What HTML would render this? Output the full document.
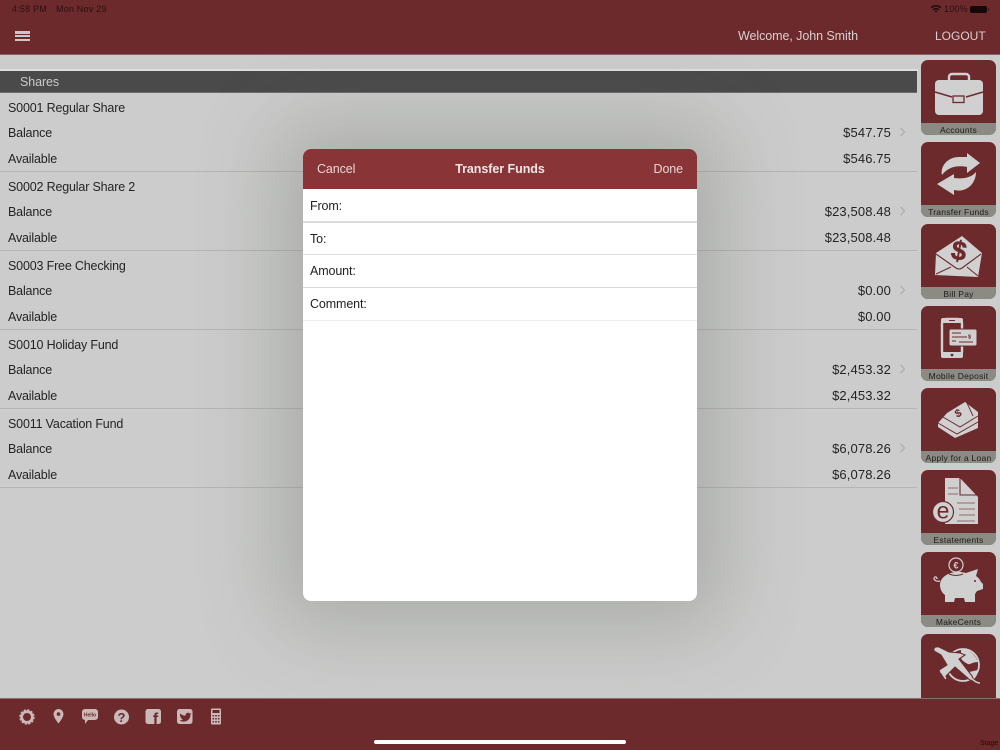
<!DOCTYPE html>
<html><head><meta charset="utf-8"><title>Transfer Funds</title>
<style>
html,body{margin:0;padding:0;width:1000px;height:750px;overflow:hidden;background:#cbcccb;font-family:"Liberation Sans",sans-serif}
.a{position:absolute;white-space:nowrap}
#hd,#ft{position:absolute;left:0;width:1000px;background:#6d2a2c;z-index:3}
#hd{top:0;height:54px;border-bottom:1px solid #8b6364}
#ft{top:699px;height:51px;box-shadow:0 -1px 0 #8b7070}
.t{font-size:12.5px;line-height:16px;color:#242424;left:8px;letter-spacing:-.17px}
.m{font-size:13px;line-height:16px;color:#242424;right:109px;letter-spacing:.12px}
.l{position:absolute;left:0;width:917px;height:1px;background:#b4b5b4}
.c{position:absolute;left:899px}
.tile{position:absolute;left:921px;width:75px;height:75px;border-radius:7px;background:#6d2a2c;overflow:hidden;z-index:1}
.tile b{position:absolute;left:0;right:0;bottom:0;height:12px;background:#8b8b84;color:#1c1c1c;font:8.5px/14px "Liberation Sans",sans-serif;text-align:center;letter-spacing:.25px}
.tile svg{position:absolute;left:0;top:0}
#modal{position:absolute;left:303px;top:149px;width:394px;height:452px;border-radius:8px;background:#fff;z-index:2;box-shadow:0 0 80px 24px rgba(95,100,90,.3);overflow:hidden}
#mh{position:absolute;left:0;top:0;width:394px;height:40px;background:#893437;color:#e6d6d6;font-size:12.5px;line-height:40px}
.f{position:absolute;left:0;width:394px;height:1px;background:#e2e2e2}
.fl{position:absolute;left:7px;font-size:12.5px;line-height:16px;color:#222;letter-spacing:-.12px}
</style></head><body>

<div id="hd">
<div class="a" style="left:12px;top:3px;font-size:9px;line-height:12px;color:#2a1010;letter-spacing:.2px">4:58 PM</div>
<div class="a" style="left:56px;top:3px;font-size:9px;line-height:12px;color:#2a1010;letter-spacing:.2px">Mon Nov 29</div>
<svg class="a" style="left:930px;top:4px" width="12" height="10" viewBox="0 0 12 10"><path d="M.5 3.2a8 8 0 0 1 11 0L10.4 4.4a6.4 6.4 0 0 0-8.800 0zM2.600 5.200a5 5 0 0 1 6.800 0L8.300 6.400a3.400 3.400 0 0 0-4.600 0zM4.600 7.200a2 2 0 0 1 2.800 0L6 8.800z" fill="#1f0d0d"/></svg>
<div class="a" style="left:944px;top:3px;font-size:9px;line-height:12px;color:#2a1010;letter-spacing:.2px">100%</div>
<div class="a" style="left:970px;top:6px;width:17px;height:7px;border-radius:2px;background:#140808"></div>
<div class="a" style="left:988px;top:8px;width:1px;height:3px;background:#3a1a1a"></div>
<div class="a" style="left:15px;top:31px;width:15px;height:2.500px;background:#cfc7c7"></div>
<div class="a" style="left:15px;top:34.800px;width:15px;height:2.500px;background:#cfc7c7"></div>
<div class="a" style="left:15px;top:38.500px;width:15px;height:2.500px;background:#cfc7c7"></div>
<div class="a" style="left:738px;top:28px;font-size:12.5px;line-height:16px;color:#d8d0d0;letter-spacing:-.07px">Welcome, John Smith</div>
<div class="a" style="left:935px;top:28px;font-size:12px;line-height:16px;color:#d8d0d0">LOGOUT</div>
</div>

<div class="a" style="left:0;top:69px;width:918px;height:2px;background:#dedede"></div>
<div class="a" style="left:0;top:71px;width:917px;height:22px;background:#4a4a4a;border-bottom:1px solid #6c6c6c;box-sizing:border-box"></div>
<div class="a" style="left:20px;top:74px;font-size:12.5px;line-height:16px;color:#c9c9c9;letter-spacing:-.1px">Shares</div>

<div class="a t" style="top:100px">S0001 Regular Share</div>
<div class="a t" style="top:125px">Balance</div><div class="a m" style="top:125px">$547.75</div>
<div class="a t" style="top:151px">Available</div><div class="a m" style="top:151px">$546.75</div>
<div class="l" style="top:171px"></div>
<svg class="c" style="top:127px" width="7" height="10"><path d="M1.500 .8l4 4.200-4 4.200" fill="none" stroke="#adadad" stroke-width="1.200"/></svg>

<div class="a t" style="top:179px">S0002 Regular Share 2</div>
<div class="a t" style="top:204px">Balance</div><div class="a m" style="top:204px">$23,508.48</div>
<div class="a t" style="top:230px">Available</div><div class="a m" style="top:230px">$23,508.48</div>
<div class="l" style="top:250px"></div>
<svg class="c" style="top:206px" width="7" height="10"><path d="M1.500 .8l4 4.200-4 4.200" fill="none" stroke="#adadad" stroke-width="1.200"/></svg>

<div class="a t" style="top:258px">S0003 Free Checking</div>
<div class="a t" style="top:283px">Balance</div><div class="a m" style="top:283px">$0.00</div>
<div class="a t" style="top:309px">Available</div><div class="a m" style="top:309px">$0.00</div>
<div class="l" style="top:329px"></div>
<svg class="c" style="top:285px" width="7" height="10"><path d="M1.500 .8l4 4.200-4 4.200" fill="none" stroke="#adadad" stroke-width="1.200"/></svg>

<div class="a t" style="top:337px">S0010 Holiday Fund</div>
<div class="a t" style="top:362px">Balance</div><div class="a m" style="top:362px">$2,453.32</div>
<div class="a t" style="top:388px">Available</div><div class="a m" style="top:388px">$2,453.32</div>
<div class="l" style="top:408px"></div>
<svg class="c" style="top:364px" width="7" height="10"><path d="M1.500 .8l4 4.200-4 4.200" fill="none" stroke="#adadad" stroke-width="1.200"/></svg>

<div class="a t" style="top:416px">S0011 Vacation Fund</div>
<div class="a t" style="top:441px">Balance</div><div class="a m" style="top:441px">$6,078.26</div>
<div class="a t" style="top:467px">Available</div><div class="a m" style="top:467px">$6,078.26</div>
<div class="l" style="top:487px"></div>
<svg class="c" style="top:443px" width="7" height="10"><path d="M1.500 .8l4 4.200-4 4.200" fill="none" stroke="#adadad" stroke-width="1.200"/></svg>

<!-- tiles -->
<div class="tile" style="top:60px"><svg width="75" height="75" viewBox="0 0 75 75">
<path d="M28 21v-4a3 3 0 0 1 3-3h14a3 3 0 0 1 3 3v4" fill="none" stroke="#d0d0d0" stroke-width="2.400"/>
<rect x="14" y="20" width="48" height="35" rx="4" fill="#d0d0d0"/>
<path d="M14 32l17 5M45 37l17-5" fill="none" stroke="#6d2a2c" stroke-width="1.500"/>
<rect x="32" y="36" width="11" height="6.500" fill="#d0d0d0" stroke="#6d2a2c" stroke-width="1.300"/></svg><b>Accounts</b></div>

<div class="tile" style="top:142px"><svg width="75" height="75" viewBox="0 0 75 75">
<path d="M46 11L59 21 46 31V25C36 23 27 25 21 33 19 24 27 15 38 15H46z" fill="#d0d0d0"/>
<path d="M33 32L16 42 33 53V48C45 51 55 42 55 30 50 36 42 37 33 36z" fill="#d0d0d0"/></svg><b>Transfer Funds</b></div>

<div class="tile" style="top:224px"><svg width="75" height="75" viewBox="0 0 75 75">
<path d="M15 29L41 12 61 29 57 53 14 51z" fill="#d0d0d0"/>
<path d="M15 50l15-7M57 52L46 43M15 30L35 44q3 2 6 0L60 30" fill="none" stroke="#6d2a2c" stroke-width="1.100"/>
<text x="38" y="36" text-anchor="middle" font-family="Liberation Sans" font-weight="700" font-size="27" fill="#6d2a2c" stroke="#6d2a2c" stroke-width=".5" transform="rotate(10 38 27)">$</text></svg><b>Bill Pay</b></div>

<div class="tile" style="top:306px"><svg width="75" height="75" viewBox="0 0 75 75">
<rect x="21" y="13" width="20" height="37" rx="4" fill="none" stroke="#d0d0d0" stroke-width="2.400"/>
<rect x="20" y="12" width="22" height="5" rx="2" fill="#d0d0d0"/><rect x="20" y="46" width="22" height="6" rx="2" fill="#d0d0d0"/>
<rect x="28" y="14" width="6" height="1" fill="#6d2a2c"/><circle cx="31" cy="49" r="1.400" fill="#6d2a2c"/>
<rect x="28" y="23" width="28" height="17" rx="2" fill="#d0d0d0" stroke="#6d2a2c" stroke-width="1"/>
<path d="M31 27h9M31 31h15M31 35h4M38 36h14" stroke="#6d2a2c" stroke-width="1"/>
<text x="47" y="32.500" font-family="Liberation Sans" font-size="5.500" font-weight="700" fill="#6d2a2c">$</text></svg><b>Mobile Deposit</b></div>

<div class="tile" style="top:388px"><svg width="75" height="75" viewBox="0 0 75 75">
<path d="M17 35L26 25 44 14 57 24V40L34 50 17 39z" fill="#d0d0d0"/>
<path d="M22 29L39 39 57 28M17 35L36 46 57 34" fill="none" stroke="#6d2a2c" stroke-width="1"/>
<path d="M46 15L52 28" stroke="#6d2a2c" stroke-width=".9"/>
<text x="37" y="29" text-anchor="middle" font-family="Liberation Sans" font-size="11" font-weight="700" fill="#6d2a2c" transform="rotate(-25 37 25)">$</text></svg><b>Apply for a Loan</b></div>

<div class="tile" style="top:470px"><svg width="75" height="75" viewBox="0 0 75 75">
<path d="M24 8H39L57 27V54H24z" fill="#d0d0d0"/>
<path d="M39 8V25H57" fill="none" stroke="#6d2a2c" stroke-width="1.100"/>
<path d="M27 18H37M27 24H37M36 33H54M38 39H54M38 45H54M36 51H54" stroke="#a37c7d" stroke-width="1.300"/>
<circle cx="22" cy="42" r="10.500" fill="#d0d0d0" stroke="#6d2a2c" stroke-width="1.200"/>
<text x="22" y="48.500" text-anchor="middle" font-family="Liberation Sans" font-size="23" fill="#6d2a2c">e</text></svg><b>Estatements</b></div>

<div class="tile" style="top:552px"><svg width="75" height="75" viewBox="0 0 75 75">
<circle cx="35" cy="13" r="7" fill="none" stroke="#d0d0d0" stroke-width="1.200"/>
<text x="35" y="16.500" text-anchor="middle" font-family="Liberation Sans" font-size="9" font-weight="700" fill="#d0d0d0">€</text>
<path d="M19 33C19 24 30 19 40 20L45 21 57 17 55 24C58 26 59 28 60 30L62 32V37L56 39 54 42V50H44L43 46H34L33 50H24V43C21 41 19 37 19 33z" fill="#d0d0d0"/>
<path d="M19 29C15 30 13 28 13 26M13 26c1-2 3-1 3 1" fill="none" stroke="#d0d0d0" stroke-width="1.300"/>
<circle cx="54" cy="29" r="1" fill="#6d2a2c"/>
<path d="M28 22q7 3 14 0" fill="none" stroke="#6d2a2c" stroke-width="1"/></svg><b>MakeCents</b></div>

<div class="tile" style="top:634px"><svg width="75" height="75" viewBox="0 0 75 75">
<circle cx="42" cy="31" r="16" fill="none" stroke="#d0d0d0" stroke-width="1.800"/>
<path d="M40 15c8 0 14 5 17 13-6 0-8 3-10 2s-6-3-7-6zM48 38l9-2c0 5-3 9-7 11z" fill="#d0d0d0"/>
<path d="M13 17q-1-5 5-4l10 5 11 1 5 2-6 4 13 17 2 5-4-1-15-13-9 9 1 3-2 1-4-6-1-1-1-3 8-5-6-10z" fill="#d0d0d0" stroke="#6d2a2c" stroke-width="1.100"/>
<path d="M50 44q5 5 9 5" fill="none" stroke="#d0d0d0" stroke-width="1.500"/></svg></div>

<!-- modal -->
<div id="modal">
<div id="mh">
<div class="a" style="left:14px;letter-spacing:-.1px">Cancel</div>
<div class="a" style="left:0;width:394px;text-align:center;font-weight:700;color:#f0e6e6;letter-spacing:-.05px">Transfer Funds</div>
<div class="a" style="right:14px;letter-spacing:-.1px">Done</div>
</div>
<div class="fl" style="top:49px">From:</div>
<div class="f" style="top:72px;height:2px;background:#dcdcdc"></div>
<div class="fl" style="top:82px">To:</div>
<div class="f" style="top:105px"></div>
<div class="fl" style="top:114px">Amount:</div>
<div class="f" style="top:138px;background:#d8d8d8"></div>
<div class="fl" style="top:147px">Comment:</div>
<div class="f" style="top:171px;background:#ececec"></div>
</div>

<!-- footer -->
<div id="ft">
<svg class="a" style="left:0;top:0" width="240" height="51" viewBox="0 699 240 51">
<g fill="#cbb9b9">
<circle cx="27" cy="717" r="5.300" fill="none" stroke="#cbb9b9" stroke-width="2.600"/>
<circle cx="27" cy="717" r="6.800" fill="none" stroke="#cbb9b9" stroke-width="1.800" stroke-dasharray="2.200 1.360"/>
<path d="M58.500 709a5 5 0 0 0-5 5c0 3.500 5 9.500 5 9.500s5-6 5-9.500a5 5 0 0 0-5-5zm0 3.300a1.800 1.800 0 1 1 0 3.600 1.800 1.800 0 0 1 0-3.600z"/>
<path d="M85 709h10a3 3 0 0 1 3 3v5a3 3 0 0 1-3 3h-7l-3 4v-4a3 3 0 0 1-3-3v-5a3 3 0 0 1 3-3z"/>
<circle cx="121.500" cy="717" r="7.500"/>
<rect x="145.500" y="709" width="15.500" height="15" rx="2.500"/>
<rect x="177" y="709" width="15.500" height="15" rx="2.500"/>
<rect x="211" y="708.500" width="10" height="16" rx="1"/>
</g>
<text x="90" y="716.500" text-anchor="middle" font-family="Liberation Sans" font-size="5" font-weight="700" fill="#6d2a2c">Hello</text>
<text x="121.500" y="721.800" text-anchor="middle" font-family="Liberation Sans" font-size="13" font-weight="700" fill="#6d2a2c">?</text>
<text x="155.500" y="724" text-anchor="middle" font-family="Liberation Sans" font-size="16" font-weight="700" fill="#6d2a2c">f</text>
<path d="M180 713.500c2 1.500 4 2.300 5.500 2.300-.3-2.500 2.700-4 4.300-2.300l1.500-.5-.9 1.600c.3 4-3 7-7 7-1.500 0-2.800-.4-3.900-1.100 1.300 0 2.500-.4 3.300-1.100-1.500-.5-3-2.500-2.800-5.900z" fill="#6d2a2c"/>
<path d="M212.500 710h7v3h-7zM212.500 715h1.600v1.500h-1.600zM215.200 715h1.600v1.500h-1.600zM217.900 715h1.600v1.500h-1.600zM212.500 718h1.600v1.500h-1.600zM215.200 718h1.600v1.500h-1.600zM217.900 718h1.600v1.500h-1.600zM212.500 721h1.600v1.500h-1.600zM215.200 721h1.600v1.500h-1.600zM217.900 721h1.600v1.500h-1.600z" fill="#6d2a2c"/>
</svg>
<div class="a" style="left:374px;top:41px;width:252px;height:4px;border-radius:2px;background:#fff"></div>
<div class="a" style="left:980px;top:40px;font-size:7px;line-height:10px;color:#1d0c0c">Stage</div>
</div>
</body></html>
